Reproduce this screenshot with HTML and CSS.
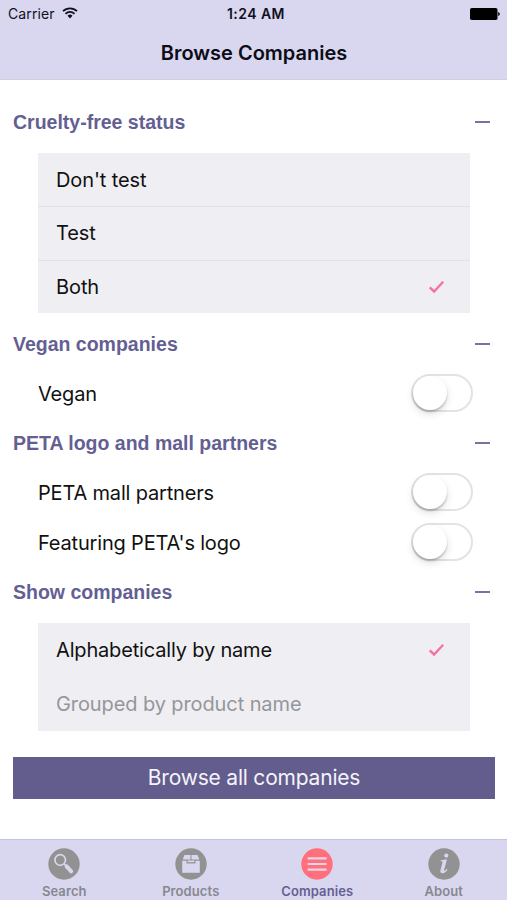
FILE: index.html
```
<!DOCTYPE html>
<html lang="en">
<head>
<meta charset="utf-8">
<title>Browse Companies</title>
<link rel="stylesheet" href="styles.css">
</head>
<body>
<div class="screen">
  <header class="header">
    <div class="status">
      <span class="carrier">Carrier
        <svg class="wifi" width="16" height="12" viewBox="0 0 16 12" fill="none" stroke="#10101c" stroke-width="1.8"><path d="M1 4.2a10 10 0 0 1 14 0"/><path d="M3.5 6.8a6.4 6.4 0 0 1 9 0"/><path d="M5.5 8.8a3.6 3.6 0 0 1 5 0L8 11.4z" fill="#10101c" stroke="none"/></svg>
      </span>
      <span class="time">1:24 AM</span>
      <svg class="battery" width="30" height="12" viewBox="0 0 30 12"><rect width="27.5" height="12" rx="1.8"/><path d="M28.2 4q1.6.5 1.6 2t-1.6 2z"/></svg>
    </div>
    <h1 class="title">Browse Companies</h1>
  </header>

  <main class="content">
    <section>
      <h2 class="heading">Cruelty-free status<i class="minus"></i></h2>
      <ul class="list three">
        <li class="option">Don't test</li>
        <li class="option">Test</li>
        <li class="option">Both<svg class="check" width="17" height="14" viewBox="0 0 17 14"><path d="M1.7 7.4l4.4 4.1L15.2 1.8"/></svg></li>
      </ul>
    </section>
    <section>
      <h2 class="heading">Vegan companies<i class="minus"></i></h2>
      <div class="toggle">Vegan<span class="switch"></span></div>
    </section>
    <section>
      <h2 class="heading">PETA logo and mall partners<i class="minus"></i></h2>
      <div class="toggle">PETA mall partners<span class="switch"></span></div>
      <div class="toggle">Featuring PETA's logo<span class="switch"></span></div>
    </section>
    <section>
      <h2 class="heading">Show companies<i class="minus"></i></h2>
      <ul class="list two">
        <li class="option">Alphabetically by name<svg class="check" width="17" height="14" viewBox="0 0 17 14"><path d="M1.7 7.4l4.4 4.1L15.2 1.8"/></svg></li>
        <li class="option muted">Grouped by product name</li>
      </ul>
    </section>
    <button class="browse">Browse all companies</button>
  </main>

  <nav class="tabs">
    <a class="tab">
      <svg width="32" height="32" viewBox="0 0 32 32"><circle cx="16" cy="16" r="15.7" fill="#929292"/><circle cx="12.2" cy="12" r="5.3" fill="none" stroke="#d8d7ef" stroke-width="1.7"/><path d="M16.2 16l2.2 2.2" stroke="#d8d7ef" stroke-width="1.7"/><path d="M18.6 18.4l4.6 5" stroke="#d8d7ef" stroke-width="4" stroke-linecap="round"/></svg>
      <span>Search</span>
    </a>
    <a class="tab">
      <svg width="32" height="32" viewBox="0 0 32 32"><circle cx="16" cy="16" r="15.7" fill="#929292"/><g fill="#d8d7ef"><path d="M9.5 7h6v4.5H7.7zM16.5 7h6l1.8 4.5h-7.8zM7.2 12.8h4.3v2.6h9v-2.6h4.3v12H7.2z"/><path d="M12.6 12.5h6.8v1.7h-6.8z"/></g></svg>
      <span>Products</span>
    </a>
    <a class="tab active">
      <svg width="32" height="32" viewBox="0 0 32 32"><circle cx="16" cy="16" r="15.7" fill="#ff6f7c"/><path d="M6.6 10.4h19M6.6 16h19M6.6 21.6h19" stroke="#e9d5e8" stroke-width="2.2"/></svg>
      <span>Companies</span>
    </a>
    <a class="tab">
      <svg width="32" height="32" viewBox="0 0 32 32"><circle cx="16" cy="16" r="15.7" fill="#929292"/><g fill="#d8d7ef"><circle cx="18.3" cy="7.6" r="2.1"/><path d="M12.8 12.2l6.2-1-2.7 10.4c-.3 1.4.3 1.6 1 1l1.5-1.5.8.7c-1.6 2.3-3.2 3.5-5 3.5-2.1 0-2.6-1.3-2.1-3.2l2-7.6c.2-.9-.1-1.2-1.8-1.3z"/></g></svg>
      <span>About</span>
    </a>
  </nav>
</div>
</body>
</html>
```
FILE: styles.css
```
* { box-sizing: border-box; }
body {
  margin: 0;
  background: #fff;
  color: #111;
  font-family: Inter, "Liberation Sans", sans-serif;
}
.screen { display: flex; flex-direction: column; width: 507px; height: 900px; overflow: hidden; }
.header { height: 80px; background: #d8d7ef; border-bottom: 1px solid #cfcfdc; flex: none; }
.status {
  display: grid;
  grid-template-columns: 1fr auto 1fr;
  align-items: center;
  height: 27px;
  padding: 0 7px 0 8px;
  font-size: 14px;
  color: #10101c;
}
.carrier { display: flex; align-items: center; gap: 7px; letter-spacing: .1px; }
.wifi { margin-top: -2px; }
.time { font-weight: 600; letter-spacing: .45px; padding-left: 4px; }
.battery { justify-self: end; }
.title { margin: 0; padding: 1px 0 0 1px; font-size: 20px; line-height: 50px; font-weight: 600; text-align: center; color: #0c0c16; }
.content { flex: 1; padding: 17px 12px 0 13px; }
.heading {
  display: flex;
  align-items: center;
  justify-content: space-between;
  height: 49px;
  margin: 0;
  padding: 2px 5px 0 0;
  font: 700 19.5px "Liberation Sans", Arial, sans-serif;
  color: #645f92;
}
.minus { width: 15px; height: 2px; margin-bottom: 2px; background: #7772a5; }
.list { list-style: none; margin: 7px 25px 6px; padding: 0; background: #efeef3; }
.three { height: 160px; display: grid; grid-template-rows: repeat(3, 1fr); }
.two { height: 108px; display: grid; grid-template-rows: repeat(2, 1fr); margin-bottom: 0; }
.option { display: flex; align-items: center; justify-content: space-between; padding: 0 25px 0 18px; font-size: 20px; letter-spacing: -.1px; }
.three .option + .option { border-top: 1px solid #e1e1e6; }
.two .option { letter-spacing: -.17px; }
.two .muted { color: #969699; letter-spacing: -.1px; }
.check { fill: none; stroke: #f571a6; stroke-width: 2.4; }
.toggle { display: flex; align-items: center; justify-content: space-between; height: 50px; padding: 2px 22px 0 25px; font-size: 20px; letter-spacing: -.18px; }
.switch { width: 62px; height: 38px; margin-bottom: 2px; border: 2px solid #e3e3e3; border-radius: 19px; display: flex; align-items: center; }
.switch::before {
  content: "";
  width: 34px;
  height: 34px;
  border-radius: 50%;
  background: #fff;
  box-shadow: 0 2px 2px rgba(0, 0, 0, .2), 0 4px 9px rgba(0, 0, 0, .12);
}
.browse {
  display: block;
  width: 482px;
  height: 42px;
  margin: 26px 0 0;
  padding: 0 0 1px;
  border: 0;
  background: #625d8d;
  color: #f4f3fb;
  font: 400 21px Inter, "Liberation Sans", sans-serif;
  letter-spacing: -.2px;
}
.tabs { display: grid; grid-template-columns: repeat(4, 1fr); height: 61px; padding: 8px 0 0 1px; background: #d8d7ef; border-top: 1px solid #c5c4d6; flex: none; }
.tab { display: flex; flex-direction: column; align-items: center; font-size: 13px; line-height: 16px; font-weight: 600; letter-spacing: .1px; color: #88878f; }
.tab span { margin-top: 3px; }
.active { color: #645f92; }
```
